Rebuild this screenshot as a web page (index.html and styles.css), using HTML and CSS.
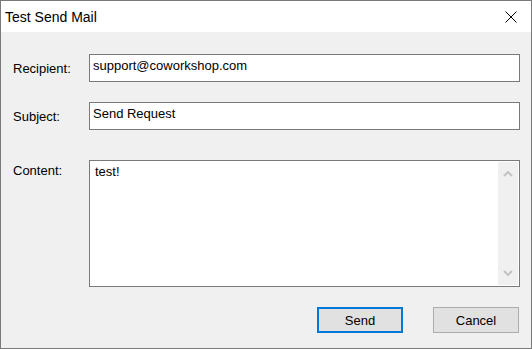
FILE: index.html
```html
<!DOCTYPE html>
<html lang="en">
<head>
    <meta charset="UTF-8">
    <meta name="viewport" content="width=device-width, initial-scale=1.0">
    <title>Test Send Mail</title>
    <link rel="stylesheet" href="styles.css">
</head>
<body>
    <div class="dialog">
        <div class="title-bar">
            <div class="title">Test Send Mail</div>
            <button class="close-button" aria-label="Close">
                <svg width="12" height="12" viewBox="0 0 12 12">
                    <path d="M0.5 0.5 L11.5 11.5 M11.5 0.5 L0.5 11.5" stroke="#000" stroke-width="1" fill="none"/>
                </svg>
            </button>
        </div>

        <div class="dialog-body">
            <div class="field-row">
                <label class="field-label">Recipient:</label>
                <div class="text-box">support@coworkshop.com</div>
            </div>

            <div class="field-row">
                <label class="field-label">Subject:</label>
                <div class="text-box">Send Request</div>
            </div>

            <div class="field-row content-row">
                <label class="field-label">Content:</label>
                <div class="text-area">
                    <div class="text-area-value">test!</div>
                    <!-- Fake disabled scrollbar -->
                    <div class="scrollbar">
                        <svg width="10" height="6" viewBox="0 0 10 6">
                            <path d="M1 5 L5 1 L9 5" stroke="#c2c2c2" stroke-width="2" fill="none"/>
                        </svg>
                        <svg width="10" height="6" viewBox="0 0 10 6">
                            <path d="M1 1 L5 5 L9 1" stroke="#c2c2c2" stroke-width="2" fill="none"/>
                        </svg>
                    </div>
                </div>
            </div>

            <div class="button-row">
                <button class="dialog-button default">Send</button>
                <button class="dialog-button">Cancel</button>
            </div>
        </div>
    </div>
</body>
</html>
```

FILE: styles.css
```css
:root {
    --frame-border: #7a7a7a;
    --face-color: #f0f0f0;
    --edit-border: #7a7a7a;
    --button-face: #e1e1e1;
    --button-border: #adadad;
    --focus-blue: #0078d7;
}

body {
    margin: 0;
    font-family: "Liberation Sans", Arial, sans-serif;
    font-size: 13px;
    color: #000;
}

.dialog {
    width: 532px;
    height: 349px;
    box-sizing: border-box;
    border: 1px solid var(--frame-border);
    display: flex;
    flex-direction: column;
}

.title-bar {
    height: 31px;
    flex-shrink: 0;
    background-color: #fff;
    display: flex;
    align-items: center;
    justify-content: space-between;
    padding: 0 14px 0 4px;
}

.title {
    font-size: 14px;
}

.close-button {
    background: none;
    border: none;
    padding: 0;
    margin: 1px 0 0 0;
    width: 12px;
    height: 12px;
    display: flex;
}

.dialog-body {
    flex: 1;
    background-color: var(--face-color);
    padding: 22px 11px 15px 12px;
    display: flex;
    flex-direction: column;
    gap: 20px;
}

.field-row {
    display: flex;
    align-items: center;
}

.content-row {
    align-items: flex-start;
    margin-top: 10px;
}

.field-label {
    width: 76px;
    flex-shrink: 0;
    line-height: 15px;
}

.content-row .field-label {
    padding-top: 3px;
}

.text-box {
    flex: 1;
    height: 28px;
    box-sizing: border-box;
    background-color: #fff;
    border: 1px solid var(--edit-border);
    padding: 3px 3px;
    line-height: 15px;
}

.text-area {
    flex: 1;
    height: 127px;
    box-sizing: border-box;
    background-color: #fff;
    border: 1px solid var(--edit-border);
    display: flex;
}

.text-area-value {
    flex: 1;
    padding: 3px 5px;
    line-height: 15px;
}

.scrollbar {
    width: 20px;
    margin: 1px;
    background-color: var(--face-color);
    display: flex;
    flex-direction: column;
    justify-content: space-between;
    align-items: center;
    padding: 9px 0 9px 0;
}

.button-row {
    display: flex;
    justify-content: flex-end;
    gap: 30px;
    padding-right: 1px;
}

.dialog-button {
    width: 86px;
    height: 26px;
    box-sizing: border-box;
    background-color: var(--button-face);
    border: 1px solid var(--button-border);
    font-family: inherit;
    font-size: 13px;
    color: #000;
    padding: 0;
}

.dialog-button.default {
    border: 2px solid var(--focus-blue);
}
```
